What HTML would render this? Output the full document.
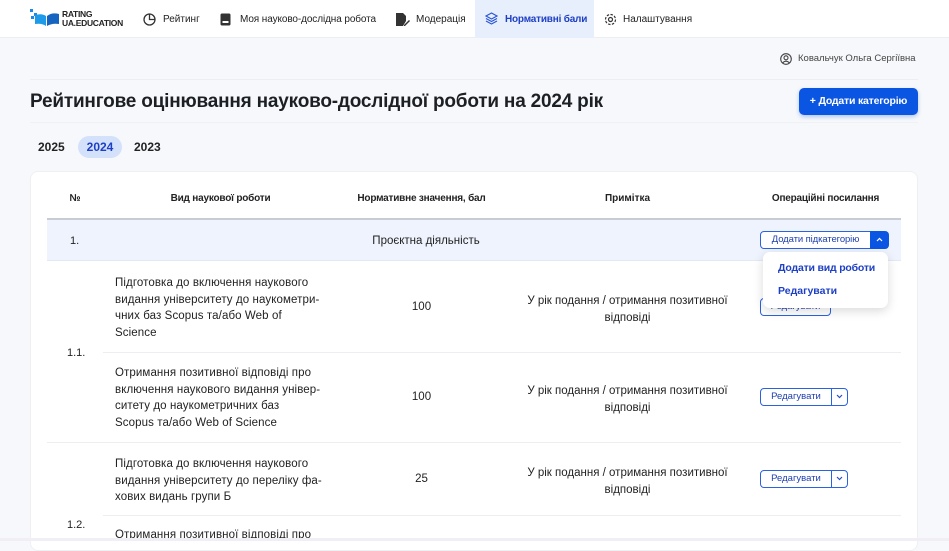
<!DOCTYPE html>
<html><head><meta charset="utf-8"><style>
*{box-sizing:border-box;margin:0;padding:0}
body{width:949px;height:541px;overflow:hidden;background:#f7f8fb;font-family:"Liberation Sans","DejaVu Sans",sans-serif;color:#1f2329;position:relative}
.abs{position:absolute;white-space:nowrap}
.nav{position:absolute;left:0;top:0;width:949px;height:38px;background:#fff;border-bottom:1px solid #eceef2}
.ni{position:absolute;top:0;height:38px;line-height:38px;font-size:10px;color:#222;white-space:nowrap}
.ni svg{position:absolute;top:12px}
.cell{position:absolute;font-size:11.5px;color:#222;white-space:nowrap}
.c{text-align:center}
.btn{position:absolute;height:18px;border:1.5px solid #2a62e0;border-radius:4px;background:#fff;font-size:9.5px;color:#1d3fae;line-height:15px;text-align:center;white-space:nowrap}
.chev{position:absolute;height:18px;border:1.5px solid #2a62e0;border-radius:0 4px 4px 0;background:#fff}
.hl{position:absolute;height:1px;background:#eceef2}
.t{letter-spacing:0.1px;top:1px}
</style></head><body>
<div class="nav">
 <div class="abs" style="left:30px;top:9px;width:30px;height:17px">
  <svg width="30" height="17" viewBox="0 0 30 17"><rect x="0" y="0" width="3" height="3" fill="#1e88e5"/><rect x="4" y="4" width="3" height="3" fill="#1e88e5"/><rect x="1" y="7" width="3" height="3" fill="#1e88e5"/><path d="M5 6 Q12 4 16 7 L16 17 Q12 14 5 15Z" fill="#1e9be8"/><path d="M17 7 Q22 3 29 5 L29 15 Q22 14 17 17Z" fill="#1565c0"/></svg>
 </div>
 <div class="abs" style="left:62px;top:10px;font-size:8.5px;font-weight:bold;line-height:9px;color:#222;letter-spacing:-0.3px">RATING<br>UA.EDUCATION</div>
 <div class="ni" style="left:143px;top:1px"><svg width="13" height="13" viewBox="0 0 13 13" fill="none" stroke="#333" stroke-width="1.3"><circle cx="6.5" cy="6.5" r="5.5"/><path d="M6.5 1v5.5h5.5"/></svg><span style="margin-left:20px">Рейтинг</span></div>
 <div class="ni" style="left:220px;top:1px"><svg width="11" height="13" viewBox="0 0 11 13"><rect x="0.5" y="0.5" width="10" height="12" rx="1.5" fill="#333"/><rect x="2.5" y="8" width="6" height="2" fill="#fff"/></svg><span style="margin-left:20px;letter-spacing:-0.1px">Моя науково-дослідна робота</span></div>
 <div class="ni" style="left:396px;top:1px"><svg width="14" height="13" viewBox="0 0 14 13"><path d="M0 0h7l3 3v5l-3 5H0z" fill="#333"/><path d="M8 12l5-5 1 1-5 5H8z" fill="#333"/></svg><span style="margin-left:20px">Модерація</span></div>
 <div class="ni" style="left:475px;width:119px;background:#e8effc;color:#1d3fc4;font-weight:bold"><svg style="left:10px" width="13" height="13" viewBox="0 0 13 13" fill="none" stroke="#2a56d8" stroke-width="1.2"><path d="M6.5 1L12 4 6.5 7 1 4z"/><path d="M1 6.5l5.5 3 5.5-3"/><path d="M1 9l5.5 3 5.5-3"/></svg><span style="margin-left:30px;letter-spacing:-0.2px;position:relative;top:1px">Нормативні бали</span></div>
 <div class="ni" style="left:604px;top:1px"><svg width="13" height="13" viewBox="0 0 13 13" fill="none" stroke="#333" stroke-width="1.2"><circle cx="6.5" cy="6.5" r="2"/><circle cx="6.5" cy="6.5" r="5" stroke-dasharray="2.5 1.4"/></svg><span style="margin-left:19px">Налаштування</span></div>
</div>
<svg class="abs" style="left:780px;top:53px" width="12" height="12" viewBox="0 0 12 12" fill="none" stroke="#444" stroke-width="1.1"><circle cx="6" cy="6" r="5.3"/><circle cx="6" cy="4.8" r="2"/><path d="M2.5 10q3.5-3.5 7 0"/></svg>
<div class="abs" style="left:798px;top:53px;font-size:9.5px;color:#444">Ковальчук Ольга Сергіївна</div>
<div class="hl" style="left:30px;top:79px;width:888px"></div>
<div class="abs" style="left:30px;top:91px;font-size:19px;font-weight:bold;color:#1c1f24;letter-spacing:-0.2px">Рейтингове оцінювання науково-дослідної роботи на 2024 рік</div>
<div class="abs" style="left:799px;top:88px;width:119px;height:27px;background:#0b55e3;border-radius:5px;color:#fff;font-size:10.5px;font-weight:bold;line-height:27px;text-align:center;letter-spacing:-0.2px;box-shadow:0 2px 4px rgba(11,85,227,.3)">+ Додати категорію</div>
<div class="hl" style="left:30px;top:122px;width:888px;background:#f0f1f4"></div>
<div class="abs" style="left:38px;top:140px;font-size:12px;font-weight:bold;color:#222">2025</div>
<div class="abs" style="left:78px;top:136px;width:44px;height:22px;border-radius:11px;background:#d4e1fb;color:#1d3fc4;font-size:12px;font-weight:bold;text-align:center;line-height:22px">2024</div>
<div class="abs" style="left:134px;top:140px;font-size:12px;font-weight:bold;color:#222">2023</div>
<div class="abs" style="left:30px;top:171px;width:888px;height:380px;background:#fff;border-radius:8px;border:1px solid #eef0f3"></div>
<div class="cell c" style="left:47px;width:56px;top:193px;font-size:10px;font-weight:bold">№</div>
<div class="cell c" style="left:103px;width:235px;top:193px;font-size:10px;font-weight:bold;letter-spacing:-0.2px">Вид наукової роботи</div>
<div class="cell c" style="left:340px;width:163px;top:193px;font-size:10px;font-weight:bold;letter-spacing:-0.2px">Нормативне значення, бал</div>
<div class="cell c" style="left:505px;width:245px;top:193px;font-size:10px;font-weight:bold">Примітка</div>
<div class="cell c" style="left:750px;width:151px;top:193px;font-size:10px;font-weight:bold;letter-spacing:-0.2px">Операційні посилання</div>
<div class="abs" style="left:47px;top:218px;width:854px;height:2px;background:#c9ccd3"></div>
<div class="abs" style="left:47px;top:220px;width:854px;height:41px;background:#eef3fd;border-bottom:1px solid #e3e8f2"></div>
<div class="cell" style="left:70px;top:235px;font-size:11px">1.</div>
<div class="cell c" style="left:340px;width:172px;top:235px">Проєктна діяльність</div>
<div class="btn" style="left:760px;top:231px;width:111px;border-radius:4px 0 0 4px;letter-spacing:-0.1px">Додати підкатегорію</div>
<div class="abs" style="left:870px;top:231px;width:19px;height:18px;background:#0b55e3;border-radius:0 4px 4px 0"><svg width="19" height="18" viewBox="0 0 19 18" fill="none" stroke="#fff" stroke-width="1.2"><path d="M7 10l2.5-2.5L12 10"/></svg></div>

<div class="cell" style="left:67px;top:347px;font-size:11px">1.1.</div>
<div class="cell" style="left:115px;top:275px;line-height:16.7px;letter-spacing:0.1px">Підготовка до включення наукового<br>видання університету до наукометри-<br>чних баз Scopus та/або Web of<br>Science</div>
<div class="cell c" style="left:340px;width:163px;top:301px">100</div>
<div class="cell c" style="left:505px;width:245px;top:293px;line-height:17px">У рік подання / отримання позитивної<br>відповіді</div>
<div class="btn" style="left:760px;top:298px;width:71px;border-radius:4px">Редагувати</div>
<div class="hl" style="left:103px;top:352px;width:798px"></div>
<div class="cell" style="left:115px;top:365px;line-height:16.7px;letter-spacing:0.1px">Отримання позитивної відповіді про<br>включення наукового видання універ-<br>ситету до наукометричних баз<br>Scopus та/або Web of Science</div>
<div class="cell c" style="left:340px;width:163px;top:391px">100</div>
<div class="cell c" style="left:505px;width:245px;top:383px;line-height:17px">У рік подання / отримання позитивної<br>відповіді</div>
<div class="btn" style="left:760px;top:388px;width:72px;border-radius:4px 0 0 4px">Редагувати</div>
<div class="chev" style="left:831px;top:388px;width:17px"><svg width="15" height="15" viewBox="0 0 15 15" fill="none" stroke="#2a4fc0" stroke-width="1.2"><path d="M5 6l2.5 2.5L10 6"/></svg></div>
<div class="hl" style="left:47px;top:442px;width:854px"></div>
<div class="cell" style="left:67px;top:519px;font-size:11px">1.2.</div>
<div class="cell" style="left:115px;top:456px;line-height:16.7px;letter-spacing:0.1px">Підготовка до включення наукового<br>видання університету до переліку фа-<br>хових видань групи Б</div>
<div class="cell c" style="left:340px;width:163px;top:473px">25</div>
<div class="cell c" style="left:505px;width:245px;top:465px;line-height:17px">У рік подання / отримання позитивної<br>відповіді</div>
<div class="btn" style="left:760px;top:470px;width:72px;border-radius:4px 0 0 4px">Редагувати</div>
<div class="chev" style="left:831px;top:470px;width:17px"><svg width="15" height="15" viewBox="0 0 15 15" fill="none" stroke="#2a4fc0" stroke-width="1.2"><path d="M5 6l2.5 2.5L10 6"/></svg></div>
<div class="hl" style="left:103px;top:515px;width:798px"></div>
<div class="cell" style="left:115px;top:529px;letter-spacing:0.1px">Отримання позитивної відповіді про</div>
<div class="abs" style="left:0;top:538px;width:949px;height:3px;background:#f1eef5"></div>

<div class="abs" style="left:763px;top:252px;width:125px;height:56px;background:#fff;border-radius:7px;box-shadow:0 3px 10px rgba(0,0,0,.15)"></div>
<div class="abs" style="left:778px;top:262px;font-size:10.5px;font-weight:bold;color:#1d3fc4;letter-spacing:-0.2px">Додати вид роботи</div>
<div class="abs" style="left:778px;top:285px;font-size:10.5px;font-weight:bold;color:#1d3fc4">Редагувати</div>
</body></html>
